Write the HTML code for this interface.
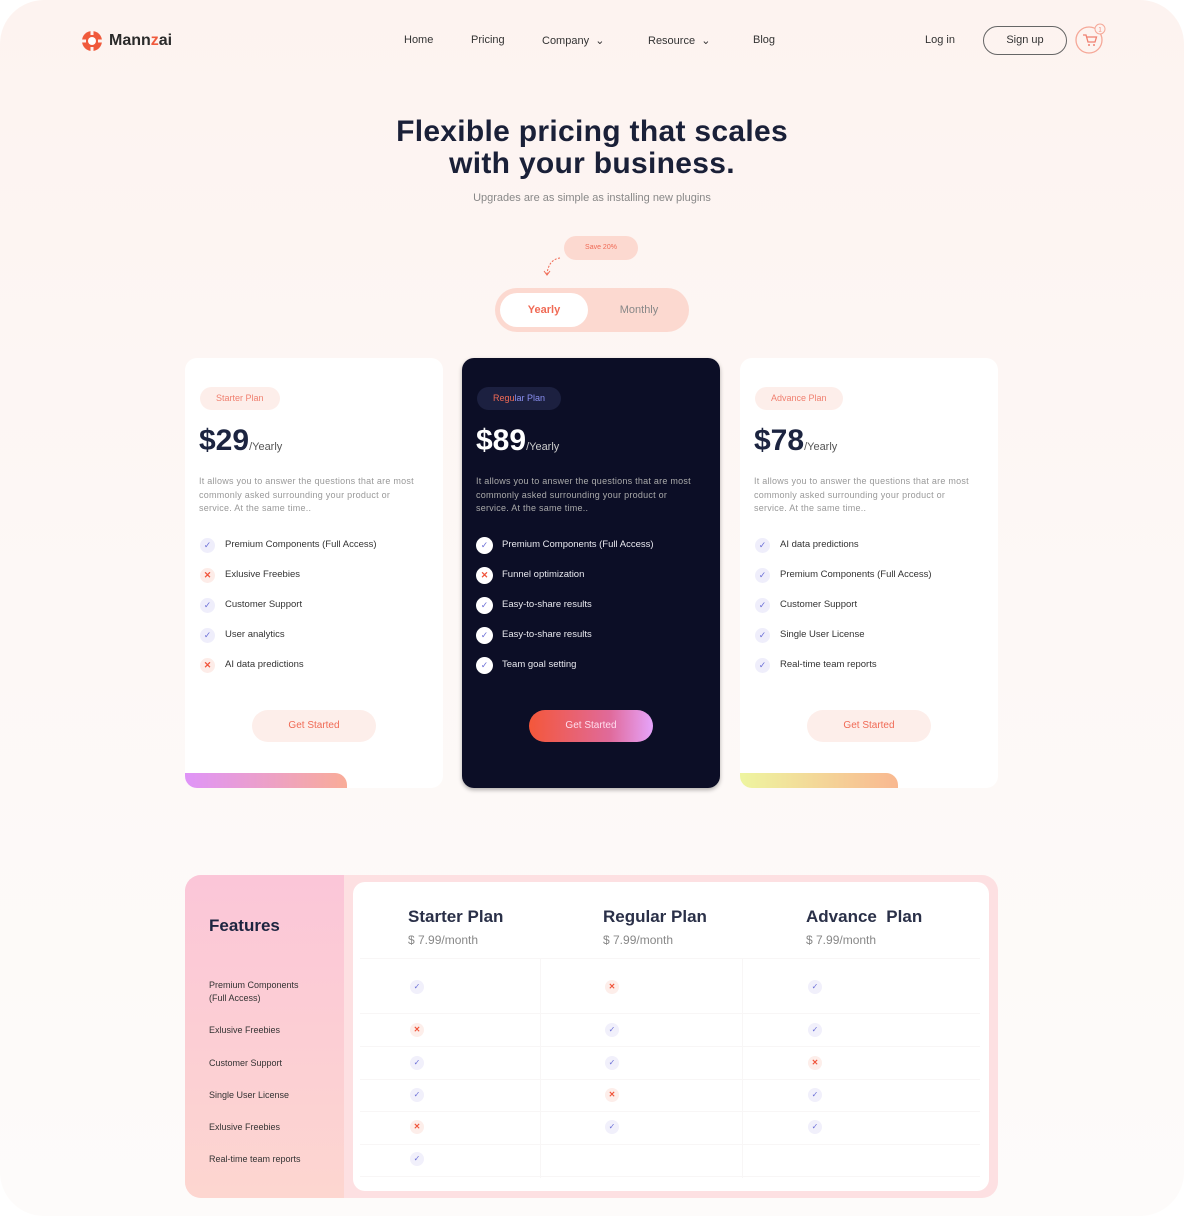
<!DOCTYPE html>
<html><head><meta charset="utf-8">
<style>
*{margin:0;padding:0;box-sizing:border-box}
body{width:1184px;height:1216px;background:#fff;font-family:"Liberation Sans",sans-serif;position:relative;overflow:hidden;color:#1c2440}
.frame{position:absolute;left:0;top:0;width:1184px;height:1216px;border-radius:44px;background:linear-gradient(#fdf3f0,#fdf8f6 50%,#fdfbfa)}
.a{position:absolute}
.nav{font-size:11px;color:#333;top:34px}
.card{position:absolute;top:358px;width:258px;height:430px;border-radius:12px;background:#fff;overflow:hidden}
.dark{background:#0c0e26;box-shadow:0 2px 4px rgba(0,0,0,.3)}
.pill{position:absolute;left:15px;top:29px;height:23px;border-radius:12px;background:#fdeeea;font-size:9px;line-height:23px;padding:0 16px;color:#f08070}
.price{position:absolute;left:14px;top:66px;font-size:30px;font-weight:bold;color:#1c2440}
.price span{font-size:11px;font-weight:normal;color:#555}
.desc{position:absolute;left:14px;top:117px;width:226px;font-size:9px;letter-spacing:.25px;line-height:13.5px;color:#999}
.li{position:absolute;left:15px;font-size:9.5px;color:#333;height:16px;line-height:16px;padding-left:25px}
.ic{position:absolute;left:0;top:1px;width:15px;height:15px;border-radius:50%;background:#efeefb;color:#6b6fd6;font-size:9px;line-height:15px;text-align:center}
.ic.x{background:#fdece8;color:#f0543a;font-weight:bold}
.dark .li{color:#e8e8ee}
.dark .ic{background:#fff;width:17px;height:17px;line-height:17px;top:0;left:-1px}
.btn{position:absolute;left:67px;top:352px;width:124px;height:32px;border-radius:16px;background:#fdeeea;color:#f06a55;font-size:10px;text-align:center;line-height:32px}
.bar{position:absolute;left:0;top:415px;width:162px;height:15px;border-radius:0 12px 0 0}
.t{position:absolute;font-size:9px;color:#333}
.ti{position:absolute;width:14px;height:14px;border-radius:50%;background:#f1f0fb;color:#6b6fd6;font-size:8px;line-height:14px;text-align:center}
.ti.x{background:#fdeeea;color:#f0543a;font-weight:bold}
.ln{position:absolute;background:#f8f6f6}
</style></head><body>
<div class="frame"></div>
<svg class="a" style="left:81px;top:29px" width="22" height="24" viewBox="0 0 22 24"><circle cx="11" cy="12" r="10" fill="#f05a3c"/><circle cx="11" cy="12" r="4" fill="#fff"/><rect x="9.5" y="0" width="3" height="6" fill="#fdf3f0"/><rect x="9.5" y="18" width="3" height="6" fill="#fdf3f0"/><rect x="0" y="10.5" width="5" height="3" fill="#fdf3f0"/><rect x="17" y="10.5" width="5" height="3" fill="#fdf3f0"/></svg>
<div class="a" style="left:109px;top:32px;font-size:16px;font-weight:bold;color:#2a2a2a">Mann<span style="color:#f05a3c">z</span>ai</div>
<div class="a nav" style="left:404px">Home</div>
<div class="a nav" style="left:471px">Pricing</div>
<div class="a nav" style="left:542px">Company &nbsp;⌄</div>
<div class="a nav" style="left:648px">Resource &nbsp;⌄</div>
<div class="a nav" style="left:753px">Blog</div>
<div class="a nav" style="left:925px">Log in</div>
<div class="a" style="left:983px;top:26px;width:84px;height:29px;border:1.5px solid #666;border-radius:15px;font-size:11px;color:#333;text-align:center;line-height:26px">Sign up</div>
<svg class="a" style="left:1074px;top:22px" width="34" height="34" viewBox="0 0 34 34"><circle cx="15" cy="18" r="13" fill="none" stroke="#f5a898" stroke-width="1.3"/><path d="M9 13h3l2 7h7l1.5-5H13" fill="none" stroke="#f08070" stroke-width="1.3"/><circle cx="15" cy="23" r="1" fill="#f08070"/><circle cx="20" cy="23" r="1" fill="#f08070"/><circle cx="26" cy="7" r="5" fill="#fdf3f0" stroke="#f5a898"/><text x="26" y="9.5" font-size="6" text-anchor="middle" fill="#f08070" font-family="Liberation Sans">1</text></svg>

<div class="a" style="left:0;width:1184px;top:116px;text-align:center;font-size:30px;font-weight:bold;line-height:32px;color:#1a2038;letter-spacing:.3px">Flexible pricing that scales<br>with your business.</div>
<div class="a" style="left:0;width:1184px;top:192px;text-align:center;font-size:11px;color:#888">Upgrades are as simple as installing new plugins</div>

<div class="a" style="left:564px;top:236px;width:74px;height:24px;border-radius:12px;background:#fcd9d0;font-size:7px;color:#f06a55;text-align:center;line-height:24px">Save 20%</div>
<svg class="a" style="left:540px;top:255px" width="24" height="24"><path d="M20 3C12 4 8 10 7 19" fill="none" stroke="#f06a55" stroke-width="1" stroke-dasharray="2 1.5"/><path d="M4 16l3 4 3-4" fill="none" stroke="#f06a55" stroke-width="1"/></svg>
<div class="a" style="left:495px;top:288px;width:194px;height:44px;border-radius:22px;background:#fcd9d0"></div>
<div class="a" style="left:500px;top:293px;width:88px;height:34px;border-radius:17px;background:#fff;color:#f06a55;font-size:11px;font-weight:bold;text-align:center;line-height:34px">Yearly</div>
<div class="a" style="left:594px;top:293px;width:90px;height:34px;color:#888;font-size:11px;text-align:center;line-height:34px">Monthly</div>

<div class="card" style="left:185px">
<div class="pill">Starter Plan</div>
<div class="price">$29<span>/Yearly</span></div>
<div class="desc">It allows you to answer the questions that are most commonly asked surrounding your product or service. At the same time..</div>
<div class="li" style="top:179px"><span class="ic">✓</span>Premium Components (Full Access)</div>
<div class="li" style="top:209px"><span class="ic x">✕</span>Exlusive Freebies</div>
<div class="li" style="top:239px"><span class="ic">✓</span>Customer Support</div>
<div class="li" style="top:269px"><span class="ic">✓</span>User analytics</div>
<div class="li" style="top:299px"><span class="ic x">✕</span>AI data predictions</div>
<div class="btn">Get Started</div>
<div class="bar" style="background:linear-gradient(90deg,#df94f8,#f9ac98)"></div>
</div>
<div class="card dark" style="left:462px">
<div class="pill" style="background:#1c2040;color:#8a8ff0"><span style="color:#f06a55">Regu</span>lar Plan</div>
<div class="price" style="color:#fff">$89<span style="color:#ccc">/Yearly</span></div>
<div class="desc" style="color:#aaa">It allows you to answer the questions that are most commonly asked surrounding your product or service. At the same time..</div>
<div class="li" style="top:179px"><span class="ic">✓</span>Premium Components (Full Access)</div>
<div class="li" style="top:209px"><span class="ic x" style="background:#fff">✕</span>Funnel optimization</div>
<div class="li" style="top:239px"><span class="ic">✓</span>Easy-to-share results</div>
<div class="li" style="top:269px"><span class="ic">✓</span>Easy-to-share results</div>
<div class="li" style="top:299px"><span class="ic">✓</span>Team goal setting</div>
<div class="btn" style="background:linear-gradient(90deg,#f4573a,#e06a9a 65%,#e6a4fb);color:#fde">Get Started</div>
</div>
<div class="card" style="left:740px">
<div class="pill">Advance Plan</div>
<div class="price">$78<span>/Yearly</span></div>
<div class="desc">It allows you to answer the questions that are most commonly asked surrounding your product or service. At the same time..</div>
<div class="li" style="top:179px"><span class="ic">✓</span>AI data predictions</div>
<div class="li" style="top:209px"><span class="ic">✓</span>Premium Components (Full Access)</div>
<div class="li" style="top:239px"><span class="ic">✓</span>Customer Support</div>
<div class="li" style="top:269px"><span class="ic">✓</span>Single User License</div>
<div class="li" style="top:299px"><span class="ic">✓</span>Real-time team reports</div>
<div class="btn">Get Started</div>
<div class="bar" style="width:158px;background:linear-gradient(90deg,#eef5a0,#f9b890)"></div>
</div>

<div class="a" style="left:185px;top:875px;width:813px;height:323px;border-radius:16px;background:#fde0e2"></div>
<div class="a" style="left:185px;top:875px;width:159px;height:323px;border-radius:16px 0 0 16px;background:linear-gradient(#fbc6d8,#fdd6d0)"></div>
<div class="a" style="left:353px;top:882px;width:636px;height:309px;border-radius:12px;background:#fff"></div>
<div class="a" style="left:209px;top:916px;font-size:17px;font-weight:bold;color:#1c2440">Features</div>
<div class="a" style="left:408px;top:907px;font-size:17px;font-weight:bold;color:#2a3048">Starter Plan</div>
<div class="a" style="left:603px;top:907px;font-size:17px;font-weight:bold;color:#2a3048">Regular Plan</div>
<div class="a" style="left:806px;top:907px;font-size:17px;font-weight:bold;color:#2a3048">Advance&nbsp; Plan</div>
<div class="a" style="left:408px;top:933px;font-size:12px;color:#888">$ 7.99/month</div>
<div class="a" style="left:603px;top:933px;font-size:12px;color:#888">$ 7.99/month</div>
<div class="a" style="left:806px;top:933px;font-size:12px;color:#888">$ 7.99/month</div>
<div class="ln" style="left:540px;top:958px;width:1px;height:220px"></div>
<div class="ln" style="left:742px;top:958px;width:1px;height:220px"></div>
<div class="ln" style="left:360px;top:958px;width:620px;height:1px"></div>
<div class="ln" style="left:360px;top:1013px;width:620px;height:1px"></div>
<div class="ln" style="left:360px;top:1046px;width:620px;height:1px"></div>
<div class="ln" style="left:360px;top:1079px;width:620px;height:1px"></div>
<div class="ln" style="left:360px;top:1111px;width:620px;height:1px"></div>
<div class="ln" style="left:360px;top:1144px;width:620px;height:1px"></div>
<div class="ln" style="left:360px;top:1176px;width:620px;height:1px"></div>

<div class="t" style="left:209px;top:979px;line-height:13px">Premium Components<br>(Full Access)</div>
<div class="t" style="left:209px;top:1025px">Exlusive Freebies</div>
<div class="t" style="left:209px;top:1058px">Customer Support</div>
<div class="t" style="left:209px;top:1090px">Single User License</div>
<div class="t" style="left:209px;top:1122px">Exlusive Freebies</div>
<div class="t" style="left:209px;top:1154px">Real-time team reports</div>

<div class="ti" style="left:410px;top:980px">✓</div><div class="ti x" style="left:605px;top:980px">✕</div><div class="ti" style="left:808px;top:980px">✓</div>
<div class="ti x" style="left:410px;top:1023px">✕</div><div class="ti" style="left:605px;top:1023px">✓</div><div class="ti" style="left:808px;top:1023px">✓</div>
<div class="ti" style="left:410px;top:1056px">✓</div><div class="ti" style="left:605px;top:1056px">✓</div><div class="ti x" style="left:808px;top:1056px">✕</div>
<div class="ti" style="left:410px;top:1088px">✓</div><div class="ti x" style="left:605px;top:1088px">✕</div><div class="ti" style="left:808px;top:1088px">✓</div>
<div class="ti x" style="left:410px;top:1120px">✕</div><div class="ti" style="left:605px;top:1120px">✓</div><div class="ti" style="left:808px;top:1120px">✓</div>
<div class="ti" style="left:410px;top:1152px">✓</div>
</body></html>
